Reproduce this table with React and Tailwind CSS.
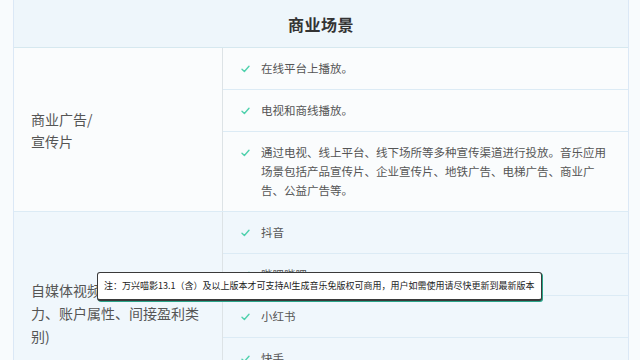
import React from "react";

const font = { fontFamily: '"Noto Sans CJK SC", "Noto Sans", sans-serif' };

function Check() {
  return (
    <svg width="9" height="8" viewBox="0 0 9 8" className="shrink-0 mt-[6px]">
      <path d="M1 4.2 L3.4 6.5 L8 1.2" fill="none" stroke="#4fd1ad" strokeWidth="1.4" strokeLinecap="round" strokeLinejoin="round" />
    </svg>
  );
}

function Row({ children, last }) {
  return (
    <div className={`flex items-start gap-[11px] pl-[18px] pr-[20px] py-[11px] ${last ? "" : "border-b border-[#dcebf5]"}`}>
      <Check />
      <div className="text-[11.5px] leading-[19px] text-[#555]">{children}</div>
    </div>
  );
}

export default function App() {
  return (
    <div className="relative w-[640px] h-[360px] overflow-hidden bg-[#f8fbfd]" style={font}>
      <div className="ml-[13px] w-[616px] border-l border-r border-[#dbe8f6]">
        <div className="h-[48px] flex items-center justify-center bg-[#eef6fb] border-b border-[#d6e8ef]">
          <span className="text-[16px] font-bold text-[#333] tracking-[0.5px]">商业场景</span>
        </div>
        <div className="flex border-b border-[#dcebf5] bg-[#fafcfd]">
          <div className="w-[209px] shrink-0 flex items-center pl-[17px] border-r border-[#dde3e6] text-[14px] leading-[22px] text-[#555]">
            <div>商业广告/<br />宣传片</div>
          </div>
          <div className="flex-1 flex flex-col">
            <Row>在线平台上播放。</Row>
            <Row>电视和商线播放。</Row>
            <Row last>通过电视、线上平台、线下场所等多种宣传渠道进行投放。音乐应用场景包括产品宣传片、企业宣传片、地铁广告、电梯广告、商业广告、公益广告等。</Row>
          </div>
        </div>
        <div className="flex bg-[#f0f7fc]">
          <div className="w-[209px] shrink-0 flex items-center pl-[17px] pb-[6px] border-r border-[#dde3e6] text-[14px] leading-[23px] text-[#555]">
            <div>自媒体视频(需区分影响<br />力、账户属性、间接盈利类<br />别)</div>
          </div>
          <div className="flex-1 flex flex-col">
            <Row>抖音</Row>
            <Row>哔哩哔哩</Row>
            <Row>小红书</Row>
            <Row>快手</Row>
            <Row last>视频号</Row>
          </div>
        </div>
      </div>
      <div className="absolute left-[97px] top-[272px] w-[445px] h-[29px] bg-white border border-[#3a3a3a] border-b-2 rounded-[3px] shadow-[1px_1px_0_#2aa58a] flex items-center pl-[6px] text-[9px] text-[#222] whitespace-nowrap">
        注：万兴喵影13.1（含）及以上版本才可支持AI生成音乐免版权可商用，用户如需使用请尽快更新到最新版本
      </div>
    </div>
  );
}
